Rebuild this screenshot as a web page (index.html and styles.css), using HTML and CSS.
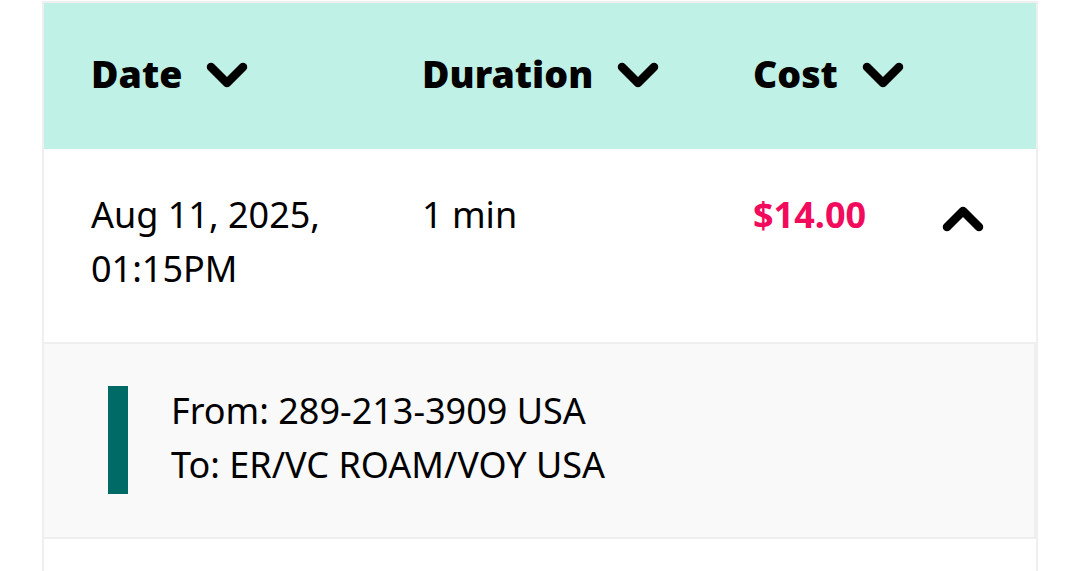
FILE: index.html
```html
<!DOCTYPE html>
<html>
<head>
<meta charset="utf-8">
<link rel="stylesheet" href="styles.css">
</head>
<body>
<div class="table">
  <div class="head">
    <div class="hcell"><span>Date</span><svg class="chev" viewBox="0 0 42 28"><path d="M5 5 L21 21 L37 5"/></svg></div>
    <div class="hcell"><span>Duration</span><svg class="chev" viewBox="0 0 42 28"><path d="M5 5 L21 21 L37 5"/></svg></div>
    <div class="hcell"><span>Cost</span><svg class="chev" viewBox="0 0 42 28"><path d="M5 5 L21 21 L37 5"/></svg></div>
  </div>
  <div class="row">
    <div class="cell">Aug 11, 2025,<br>01:15PM</div>
    <div class="cell">1 min</div>
    <div class="cell cost">$14.00</div>
    <div class="cell toggle"><svg class="chev up" viewBox="0 0 42 28"><path d="M5 23 L21 7 L37 23"/></svg></div>
  </div>
  <div class="detail">
    <div class="bar"></div>
    <div class="dtext">From: 289-213-3909 USA<br>To: ER/VC ROAM/VOY USA</div>
  </div>
  <div class="spacer"></div>
</div>
</body>
</html>
```
FILE: styles.css
```css
html, body {
  margin: 0;
  padding: 0;
  background: #ffffff;
}
body {
  font-family: "Noto Sans", "Open Sans", sans-serif;
  color: #000;
  width: 1080px;
  height: 571px;
  overflow: hidden;
}
.table {
  margin: 1px 0 0 42px;
  width: 992px;
  border: 2px solid #efefef;
  border-bottom: none;
}
.head {
  background: #c0f1e6;
  height: 146px;
  display: grid;
  grid-template-columns: 331px 331px 1fr;
  align-items: center;
  padding-left: 47px;
}
.hcell {
  display: flex;
  align-items: center;
  gap: 24px;
  font-size: 37.5px;
  font-weight: 900;
  line-height: 1;
}
.hcell span {
  margin-top: -4px;
}
.chev {
  width: 42px;
  height: 28px;
  flex: none;
}
.chev path {
  fill: none;
  stroke: #000;
  stroke-width: 8.5;
  stroke-linecap: round;
  stroke-linejoin: round;
}
.row {
  display: grid;
  grid-template-columns: 331px 331px 1fr auto;
  padding: 39px 52px 46px 47px;
  font-size: 36px;
  line-height: 54px;
  border-bottom: 2px solid #efefef;
}
.cost {
  color: #f20a5c;
  font-weight: 700;
}
.toggle {
  display: flex;
  align-items: flex-start;
  padding-top: 16px;
}
.detail {
  background: #f9f9f9;
  border-right: 2px solid #efefef;
  border-bottom: 2px solid #efefef;
  display: flex;
  align-items: stretch;
  padding: 42px 0 43px 64px;
  gap: 43px;
}
.bar {
  width: 20px;
  background: #006b66;
}
.dtext {
  font-size: 36px;
  line-height: 54px;
  margin-top: -2px;
  margin-bottom: 2px;
}
.spacer {
  height: 40px;
}
```
